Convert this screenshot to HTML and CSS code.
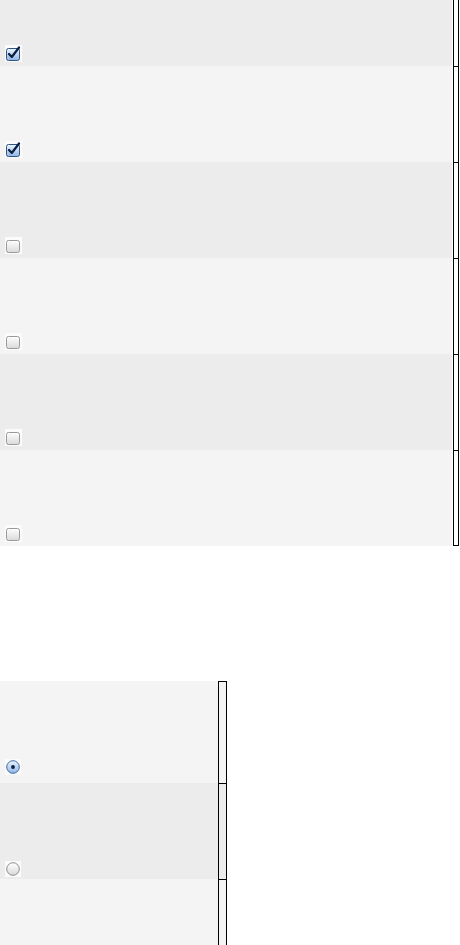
FILE: index.html
```html
<!DOCTYPE html>
<html>
<head>
    <title>Selection Lists</title>
    <link rel="stylesheet" href="styles.css">
</head>
<body>
    <!-- shared gradients for the drawn controls -->
    <svg class="defs" width="0" height="0" aria-hidden="true">
        <defs>
            <linearGradient id="blueFill" x1="0" y1="0" x2="0" y2="1">
                <stop offset="0" stop-color="#eef5fd"/>
                <stop offset="1" stop-color="#8fb5e3"/>
            </linearGradient>
            <linearGradient id="greyFill" x1="0" y1="0" x2="0" y2="1">
                <stop offset="0" stop-color="#ffffff"/>
                <stop offset="1" stop-color="#d9d9d9"/>
            </linearGradient>
        </defs>
    </svg>

    <div class="page">
        <!-- Checkbox list (scrolled, first row partly hidden) -->
        <div class="list list-wide">
            <div class="row row-odd">
                <div class="cell">
                    <span class="control">
                        <svg width="15" height="15" viewBox="0 0 15 15"><rect x="0.5" y="2.5" width="13" height="12" rx="2" fill="url(#blueFill)" stroke="#2f5583"/><path d="M3 8 L5.8 11 L13 1.5" fill="none" stroke="#0c1f42" stroke-width="2.2" stroke-linecap="round" stroke-linejoin="round"/></svg>
                    </span>
                </div>
                <div class="edge"></div>
            </div>
            <div class="row row-even">
                <div class="cell">
                    <span class="control">
                        <svg width="15" height="15" viewBox="0 0 15 15"><rect x="0.5" y="2.5" width="13" height="12" rx="2" fill="url(#blueFill)" stroke="#2f5583"/><path d="M3 8 L5.8 11 L13 1.5" fill="none" stroke="#0c1f42" stroke-width="2.2" stroke-linecap="round" stroke-linejoin="round"/></svg>
                    </span>
                </div>
                <div class="edge"></div>
            </div>
            <div class="row row-odd">
                <div class="cell">
                    <span class="control">
                        <svg width="15" height="15" viewBox="0 0 15 15"><rect x="0.5" y="2.5" width="13" height="12" rx="2" fill="url(#greyFill)" stroke="#9a9a9a"/></svg>
                    </span>
                </div>
                <div class="edge"></div>
            </div>
            <div class="row row-even">
                <div class="cell">
                    <span class="control">
                        <svg width="15" height="15" viewBox="0 0 15 15"><rect x="0.5" y="2.5" width="13" height="12" rx="2" fill="url(#greyFill)" stroke="#9a9a9a"/></svg>
                    </span>
                </div>
                <div class="edge"></div>
            </div>
            <div class="row row-odd">
                <div class="cell">
                    <span class="control">
                        <svg width="15" height="15" viewBox="0 0 15 15"><rect x="0.5" y="2.5" width="13" height="12" rx="2" fill="url(#greyFill)" stroke="#9a9a9a"/></svg>
                    </span>
                </div>
                <div class="edge"></div>
            </div>
            <div class="row row-even">
                <div class="cell">
                    <span class="control">
                        <svg width="15" height="15" viewBox="0 0 15 15"><rect x="0.5" y="2.5" width="13" height="12" rx="2" fill="url(#greyFill)" stroke="#9a9a9a"/></svg>
                    </span>
                </div>
                <div class="edge edge-last"></div>
            </div>
        </div>

        <!-- Radio list -->
        <div class="list list-narrow">
            <div class="row row-even row-first">
                <div class="cell">
                    <span class="control">
                        <svg width="14" height="14" viewBox="0 0 14 14"><circle cx="7" cy="7" r="6.3" fill="url(#blueFill)" stroke="#3a6aa3"/><circle cx="7" cy="7" r="1.9" fill="#0c1f42"/></svg>
                    </span>
                </div>
                <div class="edge"></div>
            </div>
            <div class="row row-odd row-tight">
                <div class="cell">
                    <span class="control">
                        <svg width="14" height="14" viewBox="0 0 14 14"><circle cx="7" cy="7" r="6.3" fill="url(#greyFill)" stroke="#8c8c8c"/></svg>
                    </span>
                </div>
                <div class="edge"></div>
            </div>
            <div class="row row-even row-cut">
                <div class="cell"></div>
                <div class="edge"></div>
            </div>
        </div>
    </div>
</body>
</html>
```

FILE: styles.css
```css
body {
    margin: 0;
    background-color: #fff;
    font-family: "Liberation Sans", Arial, sans-serif;
}

.defs {
    position: absolute;
}

.page {
    display: flex;
    flex-direction: column;
}

.list {
    display: flex;
    flex-direction: column;
}

.list-wide {
    width: 459px;
    margin-top: -30px;
}

.list-narrow {
    width: 227px;
    margin-top: 135px;
}

.row {
    display: flex;
    height: 96px;
}

.row-odd .cell {
    background-color: #ececec;
}

.row-even .cell {
    background-color: #f4f4f4;
}

.cell {
    flex: 1;
    display: flex;
    align-items: flex-end;
    padding: 0 0 4px 5px;
}

.control {
    display: inline-flex;
    padding: 1px;
    background-color: #fbfbfb;
}

.control svg {
    display: block;
}

.edge {
    box-sizing: border-box;
    border: 1px solid #000;
    border-bottom: none;
}

.list-wide .edge {
    width: 6px;
    margin-left: 1px;
}

.list-wide .edge-last {
    border-bottom: 1px solid #000;
}

.list-narrow .edge {
    width: 9px;
}

.list-narrow .row-odd .edge {
    background-color: #ececec;
}

.list-narrow .row-even .edge {
    background-color: #f4f4f4;
}

.row-first {
    height: 102px;
}

.row-first .cell {
    padding-bottom: 8px;
}

.row-tight .cell {
    padding-bottom: 2px;
}

.row-cut {
    height: 66px;
}
```
